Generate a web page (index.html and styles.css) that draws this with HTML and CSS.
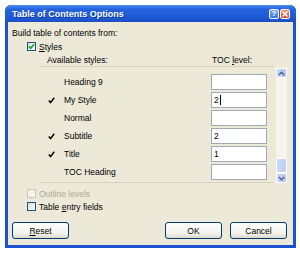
FILE: index.html
```html
<!DOCTYPE html>
<html lang="en">
<head>
    <meta charset="UTF-8">
    <title>Table of Contents Options</title>
    <link rel="stylesheet" href="styles.css">
</head>
<body>
    <div class="window">
        <div class="titlebar">
            <span class="title">Table of Contents Options</span>
            <span class="tb-btn help">?</span>
            <span class="tb-btn close">
                <svg width="6" height="6" viewBox="0 0 6 6"><path d="M0.5 0.5 L5.5 5.5 M5.5 0.5 L0.5 5.5" stroke="#fff" stroke-width="1.5"/></svg>
            </span>
        </div>

        <div class="content">
            <div class="caption">Build table of contents from:</div>

            <div class="check-row">
                <span class="checkbox">
                    <svg width="7" height="7" viewBox="0 0 7 7"><path d="M0.8 3.4 L2.7 5.3 L6.2 1.2" fill="none" stroke="#21a121" stroke-width="1.6"/></svg>
                </span>
                <span><u>S</u>tyles</span>
            </div>

            <div class="panel-head">
                <span class="head-name">Available styles:</span>
                <span class="head-level">TOC <u>l</u>evel:</span>
            </div>

            <div class="panel">
                <div class="list">
                    <div class="row">
                        <span class="mark"></span>
                        <span class="name">Heading 9</span>
                        <span class="field"></span>
                    </div>
                    <div class="row">
                        <span class="mark"><svg width="7" height="7" viewBox="0 0 7 7"><path d="M0.8 3.6 L2.6 5.6 L6.2 0.8" fill="none" stroke="#000" stroke-width="1.5"/></svg></span>
                        <span class="name">My Style</span>
                        <span class="field">2<span class="caret"></span></span>
                    </div>
                    <div class="row">
                        <span class="mark"></span>
                        <span class="name">Normal</span>
                        <span class="field"></span>
                    </div>
                    <div class="row">
                        <span class="mark"><svg width="7" height="7" viewBox="0 0 7 7"><path d="M0.8 3.6 L2.6 5.6 L6.2 0.8" fill="none" stroke="#000" stroke-width="1.5"/></svg></span>
                        <span class="name">Subtitle</span>
                        <span class="field">2</span>
                    </div>
                    <div class="row">
                        <span class="mark"><svg width="7" height="7" viewBox="0 0 7 7"><path d="M0.8 3.6 L2.6 5.6 L6.2 0.8" fill="none" stroke="#000" stroke-width="1.5"/></svg></span>
                        <span class="name">Title</span>
                        <span class="field">1</span>
                    </div>
                    <div class="row">
                        <span class="mark"></span>
                        <span class="name">TOC Heading</span>
                        <span class="field"></span>
                    </div>
                </div>

                <div class="scrollbar">
                    <span class="sb-btn">
                        <svg width="7" height="5" viewBox="0 0 7 5"><path d="M0.8 4 L3.5 1.3 L6.2 4" fill="none" stroke="#4d6185" stroke-width="1.4"/></svg>
                    </span>
                    <span class="sb-track"></span>
                    <span class="sb-thumb"></span>
                    <span class="sb-btn">
                        <svg width="7" height="5" viewBox="0 0 7 5"><path d="M0.8 1 L3.5 3.7 L6.2 1" fill="none" stroke="#4d6185" stroke-width="1.4"/></svg>
                    </span>
                </div>
            </div>

            <div class="check-row disabled outline">
                <span class="checkbox"></span>
                <span>Outline levels</span>
            </div>
            <div class="check-row">
                <span class="checkbox"></span>
                <span>Table <u>e</u>ntry fields</span>
            </div>

            <div class="buttons">
                <button class="btn"><u>R</u>eset</button>
                <span class="spacer"></span>
                <button class="btn">OK</button>
                <button class="btn">Cancel</button>
            </div>
        </div>
    </div>
</body>
</html>
```

FILE: styles.css
```css
/* Janela estilo Windows XP */
body {
    margin: 0;
    background-color: #ffffff;
    font-family: 'Liberation Sans', Arial, sans-serif;
    font-size: 8.5px;
    color: #000;
}

.window {
    margin: 5px 0 0 5px;
    width: 291px;
    border-radius: 6px 6px 0 0;
    overflow: hidden;
    background-color: #1c52cf;
}

.titlebar {
    height: 17px;
    display: flex;
    align-items: center;
    padding: 0 6px 0 7px;
    background: linear-gradient(#4a8cf0, #2462dc 25%, #1f5ad6 70%, #1a4ec4);
}

.title {
    flex: 1;
    color: #fff;
    font-size: 9px;
    font-weight: bold;
    text-shadow: 1px 1px 0 #0f3a9c;
}

.tb-btn {
    width: 10px;
    height: 10px;
    box-sizing: border-box;
    border: 1px solid #fff;
    border-radius: 2px;
    display: flex;
    align-items: center;
    justify-content: center;
    color: #fff;
    font-size: 8px;
    font-weight: bold;
    margin-left: 1px;
}

.help {
    background: linear-gradient(#7aa8f5, #3c74e6);
}

.close {
    background: linear-gradient(#f0906a, #d9462a);
}

.content {
    margin: 0 3px 3px 3px;
    padding: 5px 6px 6px 0;
    background-color: #ece9d8;
}

.caption {
    line-height: 13px;
    padding-left: 4px;
}

.check-row {
    display: flex;
    align-items: center;
    height: 13px;
    margin-left: 19px;
}

.checkbox {
    width: 9px;
    height: 9px;
    box-sizing: border-box;
    border: 1px solid #1c5180;
    background: linear-gradient(135deg, #dcdcd7, #fbfbf9);
    margin-right: 3px;
    display: flex;
    align-items: center;
    justify-content: center;
}

.disabled {
    color: #aca899;
}

.disabled .checkbox {
    border-color: #cac8bb;
    background: #f4f3ee;
}

.outline {
    margin-top: 4px;
}

.panel-head {
    display: flex;
    height: 13px;
    align-items: center;
    margin-left: 32px;
    width: 235px;
}

.head-name {
    flex: 1;
    padding-left: 7px;
}

.head-level {
    width: 63px;
}

.panel {
    display: flex;
    margin-left: 32px;
}

.list {
    width: 235px;
    box-sizing: border-box;
    border-top: 1px solid #d6d2c2;
    border-bottom: 1px solid #d6d2c2;
    padding: 6px 7px 1px 8px;
}

.row {
    display: flex;
    align-items: center;
    height: 18px;
}

.mark {
    width: 16px;
    display: flex;
    align-items: center;
}

.name {
    flex: 1;
}

.field {
    width: 56px;
    height: 16px;
    box-sizing: border-box;
    border: 1px solid #a0a9b6;
    background-color: #fff;
    padding-left: 2px;
    display: flex;
    align-items: center;
}

.caret {
    width: 1px;
    height: 10px;
    background-color: #000;
    margin-left: 1px;
}

.scrollbar {
    width: 11px;
    margin: 2px 0 0 2px;
    display: flex;
    flex-direction: column;
    background-color: #f5f4ef;
}

.sb-btn {
    height: 10px;
    box-sizing: border-box;
    border: 1px solid #fff;
    border-radius: 2px;
    background: linear-gradient(90deg, #c6d6fb, #b6c9f5);
    display: flex;
    align-items: center;
    justify-content: center;
}

.sb-track {
    flex: 1;
}

.sb-thumb {
    height: 15px;
    box-sizing: border-box;
    border: 1px solid #fff;
    border-radius: 2px;
    background: linear-gradient(90deg, #cbd9fb, #bccff7);
}

.buttons {
    display: flex;
    margin: 9px 0 0 4px;
}

.spacer {
    flex: 1;
}

.btn {
    width: 57px;
    height: 17px;
    margin-left: 8px;
    padding: 0;
    font-family: inherit;
    font-size: 8.5px;
    color: #000;
    border: 1px solid #003c74;
    border-radius: 3px;
    background: linear-gradient(#ffffff, #f2f1ea 70%, #dcd9cb);
}

.btn:first-child {
    margin-left: 0;
}
```
